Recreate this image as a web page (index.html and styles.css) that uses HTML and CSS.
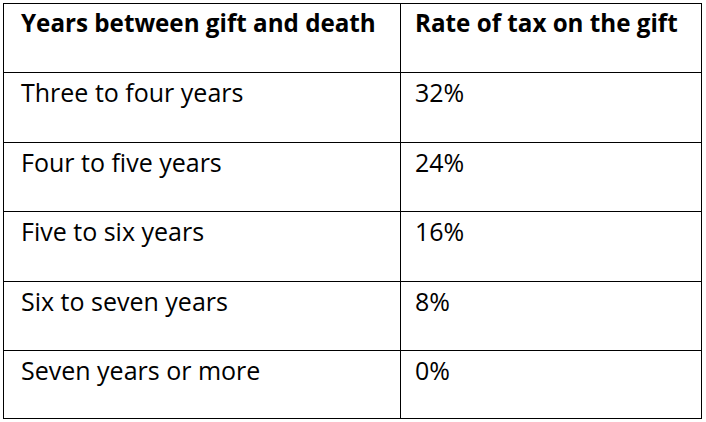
FILE: index.html
```html
<!DOCTYPE html>
<html lang="en">
<head>
<meta charset="utf-8">
<title>Rate of tax on gifts</title>
<link rel="stylesheet" href="styles.css">
</head>
<body>
<div class="tax-table">
  <div class="cell head">Years between gift and death</div>
  <div class="cell head">Rate of tax on the gift</div>
  <div class="cell">Three to four years</div>
  <div class="cell">32%</div>
  <div class="cell">Four to five years</div>
  <div class="cell">24%</div>
  <div class="cell">Five to six years</div>
  <div class="cell">16%</div>
  <div class="cell">Six to seven years</div>
  <div class="cell">8%</div>
  <div class="cell">Seven years or more</div>
  <div class="cell">0%</div>
</div>
</body>
</html>
```
FILE: styles.css
```css
html, body {
  margin: 0;
  padding: 0;
  background: #ffffff;
}
body {
  padding: 3px 0 0 3px;
  font-family: "Open Sans", "Lato", "Liberation Sans", sans-serif;
  color: #000000;
}
.tax-table {
  display: grid;
  width: 699px;
  box-sizing: border-box;
  grid-template-columns: 397px 301px;
  grid-template-rows: 69px 70px 69px 70px 69px 68px;
  border-left: 1px solid #000;
  border-top: 1px solid #000;
}
.cell {
  border-right: 1px solid #000;
  border-bottom: 1px solid #000;
  font-size: 25px;
  line-height: 34px;
  padding: 2px 0 0 17px;
  white-space: nowrap;
  font-variant-ligatures: none;
}
.cell:nth-child(even) {
  padding-left: 14px;
}
.head {
  font-size: 24.2px;
  font-weight: 700;
}
```
